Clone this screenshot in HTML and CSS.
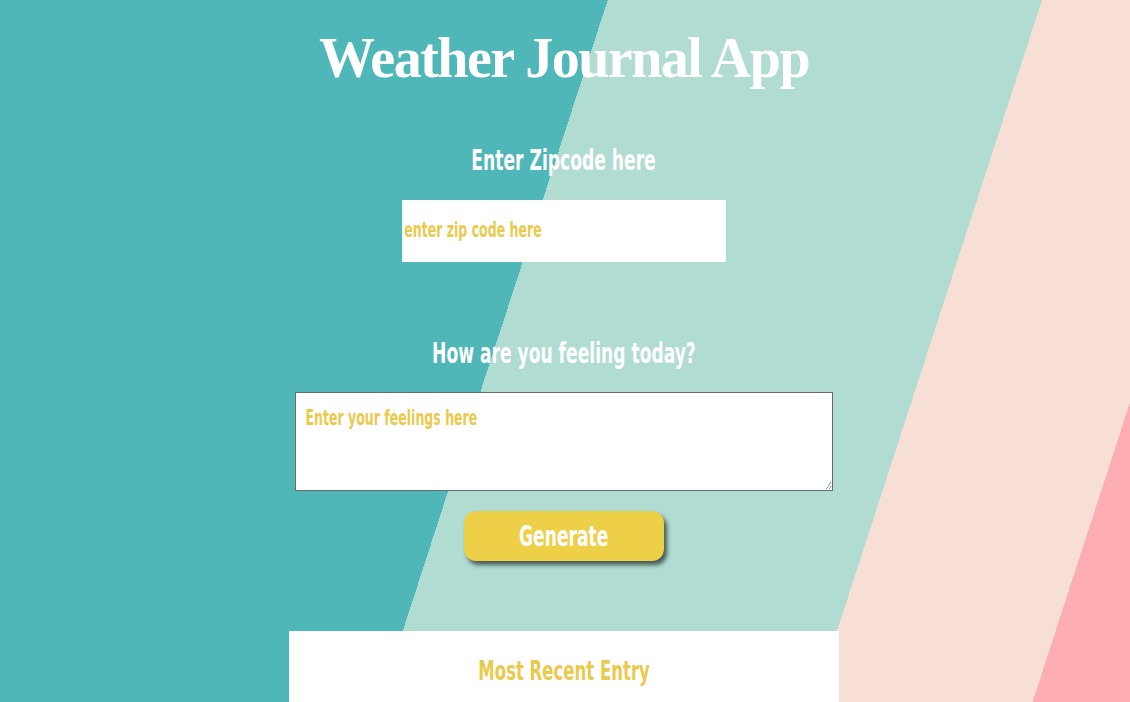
FILE: index.html
```html
<!DOCTYPE html>
<html lang="en">
<head>
<meta charset="utf-8">
<title>Weather Journal App</title>
<link rel="stylesheet" href="styles.css">
</head>
<body>
<div class="page">
  <h1 class="title">Weather Journal App</h1>
  <div class="holder zip">
    <label class="label" for="zip"><span class="squeeze">Enter Zipcode here</span></label>
    <input class="zip-input" id="zip" type="text" placeholder="enter zip code here">
  </div>
  <div class="holder feel">
    <label class="label" for="feelings"><span class="squeeze">How are you feeling today?</span></label>
    <div class="feel-box">
      <textarea class="feel-input" id="feelings" placeholder="Enter your feelings here"></textarea>
    </div>
  </div>
  <button class="generate" type="button"><span class="squeeze">Generate</span></button>
  <section class="entry">
    <div class="entry-title"><span class="squeeze">Most Recent Entry</span></div>
    <div class="entry-holder">
      <div class="entry-row"></div>
      <div class="entry-row"></div>
      <div class="entry-row"></div>
    </div>
  </section>
</div>
</body>
</html>
```
FILE: styles.css
```css
html, body {
  margin: 0;
  padding: 0;
}

body {
  font-family: "DejaVu Sans Condensed", "DejaVu Sans", "Liberation Sans", sans-serif;
  font-weight: bold;
}

.page {
  box-sizing: border-box;
  height: 100vh;
  overflow: hidden;
  padding-right: 2px;
  display: flex;
  flex-direction: column;
  align-items: center;
  background: linear-gradient(108deg,
    #4fb7b8 0 578px,
    #b0dcd2 578px 991px,
    #f8dfd6 991px 1199px,
    #feaeb2 1199px);
}

.page > * {
  flex-shrink: 0;
}

.squeeze {
  display: inline-block;
  transform: scaleX(0.68);
  white-space: nowrap;
}

.title {
  margin: 30px 0 0;
  font-family: "Liberation Serif", "Times New Roman", serif;
  font-weight: bold;
  font-size: 56px;
  line-height: 56px;
  letter-spacing: -1.5px;
  color: #ffffff;
}

.holder {
  display: flex;
  flex-direction: column;
  align-items: center;
}

.label {
  display: block;
  font-size: 28px;
  line-height: 30px;
  color: #ffffff;
}

.zip {
  margin-top: 60px;
  gap: 24px;
}

.zip-input {
  box-sizing: border-box;
  width: 476px;
  height: 62px;
  border: none;
  outline: none;
  padding: 0 3px 3px;
  background: #ffffff;
  font-family: inherit;
  font-size: 20.5px;
  font-weight: bold;
  transform: scaleX(0.68);
}

.feel {
  margin-top: 77px;
  gap: 23px;
}

.feel-box {
  box-sizing: border-box;
  width: 538px;
  height: 99px;
  border: 1px solid #6b6b6b;
  background: #ffffff;
  overflow: hidden;
}

.feel-input {
  display: block;
  box-sizing: border-box;
  width: 788px;
  height: 97px;
  margin: 0;
  border: none;
  outline: none;
  padding: 12px 14px 9px;
  background: #ffffff;
  font-family: inherit;
  font-size: 20.5px;
  font-weight: bold;
  line-height: 26px;
  resize: both;
  transform: scaleX(0.68);
  transform-origin: left top;
}

.zip-input::placeholder,
.feel-input::placeholder {
  color: #eaca4c;
  opacity: 1;
}

.generate {
  margin-top: 20px;
  width: 200px;
  height: 50px;
  padding: 0;
  border: none;
  border-radius: 12px;
  background: #eecf48;
  color: #ffffff;
  font-family: inherit;
  font-size: 28px;
  font-weight: bold;
  box-shadow: 3px 4px 4px rgba(0, 0, 0, 0.6);
  cursor: pointer;
}

.entry {
  margin-top: 70px;
  width: 550px;
  background: #ffffff;
  padding-top: 25px;
  min-height: 300px;
  display: flex;
  flex-direction: column;
  align-items: center;
}

.entry-title {
  font-size: 27px;
  line-height: 30px;
  color: #eaca4c;
}

.entry-holder {
  display: flex;
  flex-direction: column;
  gap: 10px;
  margin-top: 20px;
}
```
